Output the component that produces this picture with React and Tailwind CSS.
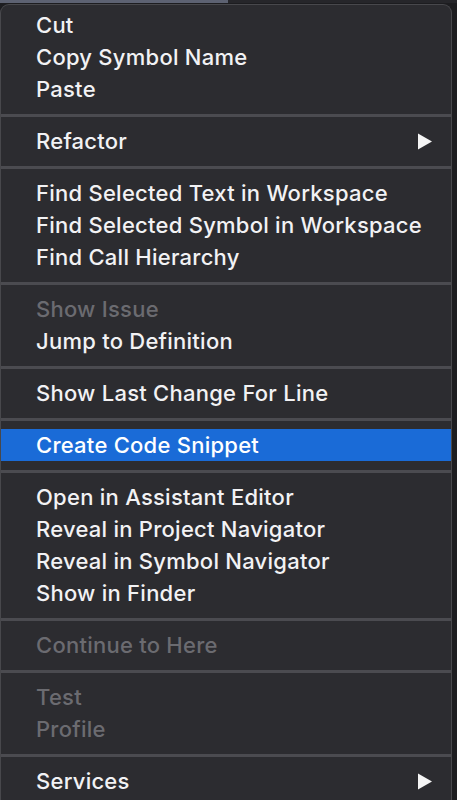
import React from 'react';

const sections = [
    [{ label: 'Cut' }, { label: 'Copy Symbol Name' }, { label: 'Paste' }],
    [{ label: 'Refactor', submenu: true }],
    [
        { label: 'Find Selected Text in Workspace' },
        { label: 'Find Selected Symbol in Workspace' },
        { label: 'Find Call Hierarchy' },
    ],
    [{ label: 'Show Issue', disabled: true }, { label: 'Jump to Definition' }],
    [{ label: 'Show Last Change For Line' }],
    [{ label: 'Create Code Snippet', active: true }],
    [
        { label: 'Open in Assistant Editor' },
        { label: 'Reveal in Project Navigator' },
        { label: 'Reveal in Symbol Navigator' },
        { label: 'Show in Finder' },
    ],
    [{ label: 'Continue to Here', disabled: true }],
    [{ label: 'Test', disabled: true }, { label: 'Profile', disabled: true }],
    [{ label: 'Services', submenu: true }],
];

const Arrow = () => (
    <svg width="16" height="17" viewBox="0 0 16 17" className="mr-[18px]">
        <path d="M1 0.5 L15 8.5 L1 16.5 Z" fill="#f5f5f5" />
    </svg>
);

const MenuItem = ({ item }) => (
    <div
        className={
            'flex h-8 items-center justify-between pl-[35px] ' +
            (item.active ? 'bg-[#1a6bd7] text-white' : item.disabled ? 'text-[#6b6b70]' : 'text-[#f2f2f4]')
        }
    >
        <span className="text-[22px] font-medium leading-none tracking-[0.25px]">{item.label}</span>
        {item.submenu && <Arrow />}
    </div>
);

const Separator = () => (
    <div className="flex h-5 items-center">
        <div className="h-[3px] w-full bg-[#4b4b50]" />
    </div>
);

export default function App() {
    return (
        <div
            className="h-[800px] w-[457px] overflow-hidden bg-[#1d1d20]"
            style={{ fontFamily: 'Inter, "Liberation Sans", sans-serif' }}
        >
            <div className="flex h-[3px]">
                <div className="w-[228px] bg-[#5d6272]" />
                <div className="flex-1 bg-[#26262a]" />
            </div>
            <div className="mr-[5px] mt-px h-[800px] rounded-t-[9px] border border-b-0 border-[#48484c] bg-[#2c2c30] pt-[4px]">
                {sections.map((section, i) => (
                    <div key={i}>
                        {i > 0 && <Separator />}
                        {section.map(item => (
                            <MenuItem key={item.label} item={item} />
                        ))}
                    </div>
                ))}
            </div>
        </div>
    );
}
